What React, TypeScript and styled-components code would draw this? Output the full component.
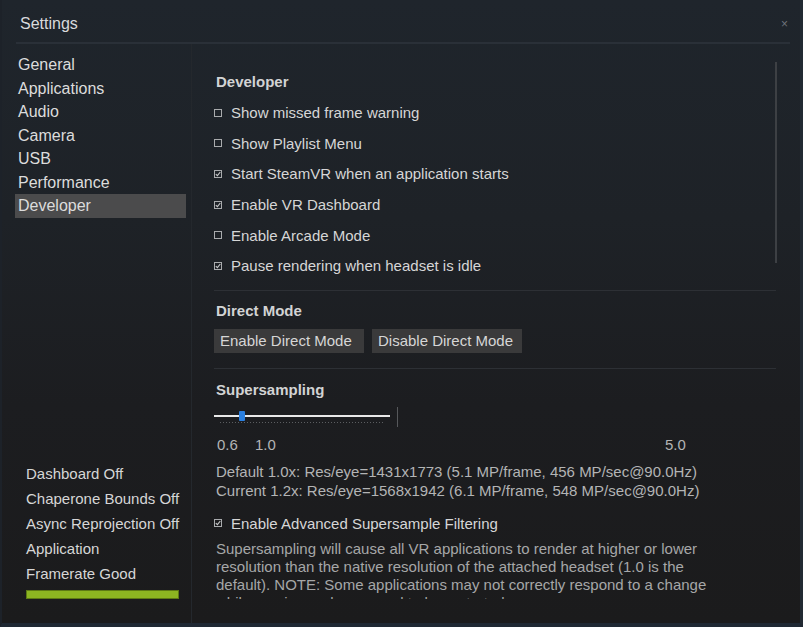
import React from "react";
import styled, { createGlobalStyle } from "styled-components";

const Global = createGlobalStyle`
  html, body { margin: 0; padding: 0; }
  body {
    width: 803px; height: 627px; overflow: hidden;
    font-family: "Liberation Sans", Arial, sans-serif;
    background: #1c1d20;
  }
`;

const Window = styled.div`
  width: 803px;
  height: 627px;
  box-sizing: border-box;
  display: flex;
  flex-direction: column;
  background: linear-gradient(180deg, #1f252c 0%, #1e2227 35%, #1c1d20 65%, #1b1b1c 100%);
  border-right: 3px solid #222a33;
  border-bottom: 4px solid #1f2833;
  border-left: 2px solid #1d2229;
`;

const TitleBar = styled.div`
  height: 42px;
  display: flex;
  align-items: center;
  justify-content: space-between;
  padding: 5px 12px 0 18px;
  box-sizing: border-box;
`;

const Title = styled.div`
  font-size: 16px;
  color: #d9dadc;
`;

const Close = styled.div`
  font-size: 12px;
  color: #6e737a;
`;

const Rule = styled.div`
  height: 2px;
  margin: 0 10px 0 14px;
  background: #2a3038;
`;

const Body = styled.div`
  flex: 1;
  display: flex;
  min-height: 0;
`;

const Sidebar = styled.div`
  width: 176px;
  border-right: 1px solid #24282d;
  display: flex;
  flex-direction: column;
  justify-content: space-between;
  padding: 9px 0 24px 13px;
`;

const Nav = styled.div`
  display: flex;
  flex-direction: column;
`;

const NavItem = styled.div<{ $active?: boolean }>`
  height: 23.5px;
  line-height: 23.5px;
  width: 168px;
  padding-left: 3px;
  font-size: 16px;
  color: #dcdcdc;
  background: ${(p) => (p.$active ? "#4b4b4c" : "transparent")};
`;

const Status = styled.div`
  display: flex;
  flex-direction: column;
  padding-left: 11px;
`;

const StatusItem = styled.div`
  height: 25px;
  line-height: 25px;
  font-size: 15px;
  color: #d6d6d6;
`;

const Meter = styled.div`
  margin-top: 4px;
  width: 151px;
  height: 7px;
  background: #8cb521;
  border: 1px solid #5d7a14;
`;

const Content = styled.div`
  flex: 1;
  position: relative;
  overflow: hidden;
  margin-bottom: 24px;
  padding: 28px 0 0 22px;
  display: flex;
  flex-direction: column;
  align-items: flex-start;
  & > * { flex-shrink: 0; }
`;

const Scrollbar = styled.div`
  position: absolute;
  left: 583px;
  top: 18px;
  width: 2px;
  height: 201px;
  background: #3d4044;
`;

const Heading = styled.div<{ $mt?: number }>`
  font-size: 15px;
  font-weight: bold;
  color: #d2d3d4;
  line-height: 20px;
  margin-top: ${(p) => p.$mt ?? 0}px;
  padding-left: 2px;
`;

const CheckRow = styled.div<{ $mt?: number }>`
  height: 30.6px;
  display: flex;
  align-items: center;
  gap: 9px;
  font-size: 15px;
  color: #d6d6d6;
  margin-top: ${(p) => p.$mt ?? 0}px;
`;

const Box = styled.span`
  width: 6px;
  height: 6px;
  border: 1px solid #a9abad;
  display: inline-flex;
  align-items: center;
  justify-content: center;
  flex: none;
`;

const Separator = styled.div<{ $mt: number }>`
  width: 562px;
  height: 1px;
  background: #2d3035;
  margin-top: ${(p) => p.$mt}px;
`;

const Buttons = styled.div`
  display: flex;
  gap: 8px;
  margin-top: 8px;
`;

const Button = styled.div`
  width: 150px;
  height: 24px;
  line-height: 24px;
  box-sizing: border-box;
  padding-left: 6px;
  background: #3a3a3b;
  font-size: 15px;
  color: #d6d6d6;
`;

const Slider = styled.div`
  margin-top: 6px;
  width: 186px;
  height: 22px;
  position: relative;
`;

const Track = styled.div`
  position: absolute;
  left: 0;
  top: 9px;
  width: 176px;
  height: 2px;
  background: #e8e8e8;
`;

const Ticks = styled.div`
  position: absolute;
  left: 6px;
  top: 16px;
  width: 165px;
  height: 1px;
  background: repeating-linear-gradient(90deg, #5b5d60 0 1px, transparent 1px 3px);
`;

const Thumb = styled.div`
  position: absolute;
  left: 25px;
  top: 5px;
  width: 6px;
  height: 10px;
  border-radius: 1px;
  background: #2a7fe0;
`;

const EndMark = styled.div`
  position: absolute;
  left: 183px;
  top: 1px;
  width: 1px;
  height: 20px;
  background: #56585b;
`;

const Scale = styled.div`
  width: 480px;
  position: relative;
  height: 18px;
  margin-top: 8px;
  font-size: 15px;
  color: #b3b4b5;
  line-height: 18px;
`;

const Tick = styled.span<{ $x: number }>`
  position: absolute;
  left: ${(p) => p.$x}px;
  top: 0;
`;

const Info = styled.div`
  margin-top: 8px;
  padding-left: 2px;
  font-size: 15px;
  line-height: 19px;
  color: #b3b4b5;
`;

const Para = styled.div`
  margin-top: 1px;
  padding-left: 2px;
  width: 495px;
  font-size: 15px;
  line-height: 18px;
  color: #a6a7a8;
`;

const Check = ({ on }: { on: boolean }) => (
  <Box>
    {on && (
      <svg width="6" height="6" viewBox="0 0 6 6">
        <path d="M0.8 3.1 L2.4 4.7 L5.3 1" stroke="#c8c9ca" strokeWidth="1.1" fill="none" />
      </svg>
    )}
  </Box>
);

const devOptions: [string, boolean][] = [
  ["Show missed frame warning", false],
  ["Show Playlist Menu", false],
  ["Start SteamVR when an application starts", true],
  ["Enable VR Dashboard", true],
  ["Enable Arcade Mode", false],
  ["Pause rendering when headset is idle", true],
];

const navItems = ["General", "Applications", "Audio", "Camera", "USB", "Performance", "Developer"];
const statusItems = ["Dashboard Off", "Chaperone Bounds Off", "Async Reprojection Off", "Application", "Framerate Good"];

export default function App() {
  return (
    <>
      <Global />
      <Window>
        <TitleBar>
          <Title>Settings</Title>
          <Close>×</Close>
        </TitleBar>
        <Rule />
        <Body>
          <Sidebar>
            <Nav>
              {navItems.map((n) => (
                <NavItem key={n} $active={n === "Developer"}>{n}</NavItem>
              ))}
            </Nav>
            <Status>
              {statusItems.map((s) => (
                <StatusItem key={s}>{s}</StatusItem>
              ))}
              <Meter />
            </Status>
          </Sidebar>
          <Content>
            <Scrollbar />
            <Heading>Developer</Heading>
            {devOptions.map(([label, on], i) => (
              <CheckRow key={label} $mt={i === 0 ? 5.5 : 0}>
                <Check on={on} />
                {label}
              </CheckRow>
            ))}
            <Separator $mt={9} />
            <Heading $mt={10}>Direct Mode</Heading>
            <Buttons>
              <Button>Enable Direct Mode</Button>
              <Button>Disable Direct Mode</Button>
            </Buttons>
            <Separator $mt={15} />
            <Heading $mt={11}>Supersampling</Heading>
            <Slider>
              <Track />
              <Ticks />
              <Thumb />
              <EndMark />
            </Slider>
            <Scale>
              <Tick $x={3}>0.6</Tick>
              <Tick $x={41}>1.0</Tick>
              <Tick $x={451}>5.0</Tick>
            </Scale>
            <Info>
              Default 1.0x: Res/eye=1431x1773 (5.1 MP/frame, 456 MP/sec@90.0Hz)
              <br />
              Current 1.2x: Res/eye=1568x1942 (6.1 MP/frame, 548 MP/sec@90.0Hz)
            </Info>
            <CheckRow $mt={8}>
              <Check on={true} />
              Enable Advanced Supersample Filtering
            </CheckRow>
            <Para>
              Supersampling will cause all VR applications to render at higher or lower resolution than the native
              resolution of the attached headset (1.0 is the default). NOTE: Some applications may not correctly
              respond to a change while running and may need to be restarted.
            </Para>
          </Content>
        </Body>
      </Window>
    </>
  );
}
